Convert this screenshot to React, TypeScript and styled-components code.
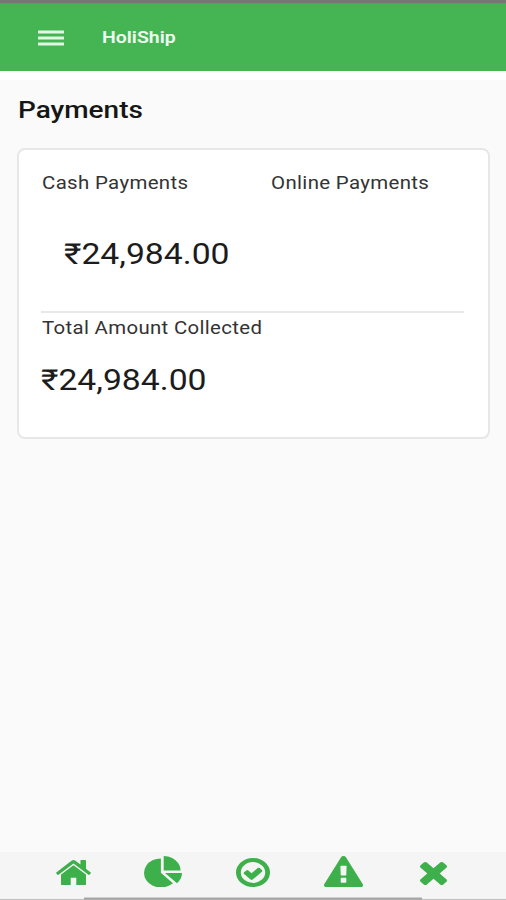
import React from "react";
import styled, { createGlobalStyle } from "styled-components";

const GlobalStyle = createGlobalStyle`
  *, *::before, *::after { box-sizing: border-box; }
  html, body, #root { margin: 0; height: 100%; }
  body { font-family: Roboto, "Liberation Sans", sans-serif; color: #1c1c1c; }
`;

const Screen = styled.div`
  height: 100vh;
  min-height: 900px;
  display: flex;
  flex-direction: column;
  background: #fafafa;
  overflow: hidden;
`;

const StatusStrip = styled.div`
  height: 4px;
  background: #777876;
  border-bottom: 1px solid #65956a;
`;

const Header = styled.header`
  height: 67px;
  display: flex;
  align-items: center;
  padding: 0 0 1px 38px;
  background: #45b553;
  color: #effcf0;
`;

const MenuButton = styled.button`
  display: flex;
  width: 26px;
  margin: 2px 38px 0 0;
  padding: 0;
  border: 0;
  background: none;
  color: #e2f8e3;
`;

const HeaderEdge = styled.div`
  height: 9px;
  background: #fff;
`;

const Text = styled.span<{ $size: number; $stretch: number; $weight?: number; $spacing?: number }>`
  display: block;
  width: max-content;
  font-size: ${(p) => p.$size}px;
  line-height: 1.2;
  font-weight: ${(p) => p.$weight ?? 400};
  letter-spacing: ${(p) => p.$spacing ?? 0}px;
  transform: scaleX(${(p) => p.$stretch});
  transform-origin: left center;
  white-space: nowrap;
`;

const Main = styled.main`
  flex: 1;
  padding: 15px 16px 0 17px;
`;

const Title = styled.h1`
  margin: 0 0 23px 1px;
  height: 30px;
  display: flex;
  align-items: center;
  color: #161616;
`;

const Card = styled.section`
  height: 291px;
  border: 2px solid #e7e7e7;
  border-radius: 8px;
  background: #fff;
  padding: 22px 24px 0 22px;
`;

const Columns = styled.div`
  display: grid;
  grid-template-columns: 229px 1fr;
  height: 141px;
  border-bottom: 2px solid #e8e8e8;
`;

const Label = styled.div`
  height: 22px;
  padding-left: 0.5px;
  color: #333;
`;

const Amount = styled.div<{ $inset?: number; $gap: number }>`
  margin-top: ${(p) => p.$gap}px;
  padding-left: ${(p) => p.$inset ?? 0}px;
`;

const Total = styled.div`
  padding-top: 4px;
`;

const Nav = styled.nav`
  height: 45px;
  display: grid;
  grid-template-columns: repeat(5, 90px);
  padding-left: 28px;
  background: #f5f5f5;
`;

const NavItem = styled.button<{ $top: number }>`
  display: flex;
  justify-content: center;
  align-items: flex-start;
  padding: ${(p) => p.$top}px 0 0;
  border: 0;
  background: none;
  color: #3eb04b;
`;

const BottomEdge = styled.div`
  height: 3px;
  display: grid;
  grid-template-columns: 84px 338px 1fr;
`;

const EdgePart = styled.div<{ $dark?: boolean }>`
  border-top: 1px solid ${(p) => (p.$dark ? "#cfcfcf" : "#f8f8f8")};
  border-bottom: 1px solid ${(p) => (p.$dark ? "#acacac" : "#c4c4c4")};
  background: ${(p) => (p.$dark ? "#a5a5a5" : "#eeeeee")};
`;

type IconProps = { width: number; height: number; viewBox: string; children: React.ReactNode };

function Icon({ width, height, viewBox, children }: IconProps) {
  return (
    <svg width={width} height={height} viewBox={viewBox} preserveAspectRatio="none" fill="currentColor" aria-hidden="true">
      {children}
    </svg>
  );
}

const navItems = [
  {
    label: "Home", top: 7.5, width: 35, height: 25.5, viewBox: "88 253 1616 1283",
    art: <path d="M1472 992v480q0 26-19 45t-45 19h-384v-384h-256v384h-384q-26 0-45-19t-19-45v-480q0-1 .5-3t.5-3l575-474 575 474q1 2 1 6zm223-69l-62 74q-8 9-21 11h-3q-13 0-21-7l-692-577-692 577q-12 8-24 7-13-2-21-11l-62-74q-8-10-7-23.5t11-21.500l719-599q32-26 76-26t76 26l244 204v-195q0-14 9-23t23-9h192q14 0 23 9t9 23v408l219 182q10 8 11 21.500t-7 23.500z" />,
  },
  {
    label: "Reports", top: 3.5, width: 38, height: 31.5, viewBox: "0 0 1728 1664",
    art: <path d="M768 890l546 546q-106 108-247.500 168t-298.500 60q-209 0-385.500-103t-279.500-279.500-103-385.500 103-385.500 279.500-279.500 385.500-103v762zm187 6h773q0 157-60 298.500t-168 247.500zm709-128h-768v-768q209 0 385.500 103t279.500 279.500 103 385.500z" />,
  },
  {
    label: "Completed", top: 6, width: 34, height: 29, viewBox: "0 0 1536 1536",
    art: (
      <>
        <circle cx="768" cy="768" r="660" fill="none" stroke="currentColor" strokeWidth="216" />
        <path d="M1171 723l-422 422q-19 19-45 19t-45-19l-294-294q-19-19-19-45t19-45l102-102q19-19 45-19t45 19l147 147 275-275q19-19 45-19t45 19l102 102q19 19 19 45t-19 45z" />
      </>
    ),
  },
  {
    label: "Alerts", top: 3.5, width: 39, height: 31.5, viewBox: "0 0 1792 1664",
    art: <path d="M1024 1375v-190q0-14-9.500-23.500t-22.500-9.500h-192q-13 0-22.500 9.500t-9.500 23.500v190q0 14 9.500 23.500t22.500 9.500h192q13 0 22.500-9.500t9.500-23.500zm-2-374l18-459q0-12-10-19-13-11-24-11h-220q-11 0-24 11-10 7-10 21l17 457q0 10 10 16.500t24 6.500h185q14 0 23.500-6.500t10.500-16.500zm-14-934l768 1408q35 63-2 126-17 29-46.500 46t-63.500 17h-1536q-34 0-63.500-17t-46.500-46q-37-63-2-126l768-1408q17-31 47-49t65-18 65 18 47 49z" />,
  },
  {
    label: "Cancelled", top: 10, width: 27, height: 23, viewBox: "302 366 1188 1188",
    art: <path d="M1490 1322q0 40-28 68l-136 136q-28 28-68 28t-68-28l-294-294-294 294q-28 28-68 28t-68-28l-136-136q-28-28-28-68t28-68l294-294-294-294q-28-28-28-68t28-68l136-136q28-28 68-28t68 28l294 294 294-294q28-28 68-28t68 28l136 136q28 28 28 68t-28 68l-294 294 294 294q28 28 28 68z" />,
  },
];

export default function App() {
  return (
    <>
      <GlobalStyle />
      <Screen>
        <StatusStrip />
        <Header>
          <MenuButton aria-label="Menu">
            <Icon width={26} height={16} viewBox="0 0 26 16">
              <rect y="0.5" width="26" height="3" rx="0.5" />
              <rect y="6.500" width="26" height="3" rx="0.5" />
              <rect y="12.500" width="26" height="3" rx="0.5" />
            </Icon>
          </MenuButton>
          <Text $size={17} $stretch={1.145} $weight={600}>HoliShip</Text>
        </Header>
        <HeaderEdge />
        <Main>
          <Title>
            <Text $size={24} $stretch={1.165} $weight={500}>Payments</Text>
          </Title>
          <Card>
            <Columns>
              <div>
                <Label><Text $size={18} $stretch={1.135} $spacing={0.3}>Cash Payments</Text></Label>
                <Amount $inset={22.5} $gap={43}>
                  <Text $size={29} $stretch={1.162}>₹24,984.00</Text>
                </Amount>
              </div>
              <Label><Text $size={18} $stretch={1.135} $spacing={0.3}>Online Payments</Text></Label>
            </Columns>
            <Total>
              <Label><Text $size={18} $stretch={1.132} $spacing={0.3}>Total Amount Collected</Text></Label>
              <Amount $gap={24}>
                <Text $size={29} $stretch={1.162}>₹24,984.00</Text>
              </Amount>
            </Total>
          </Card>
        </Main>
        <Nav>
          {navItems.map((n) => (
            <NavItem key={n.label} $top={n.top} aria-label={n.label}>
              <Icon width={n.width} height={n.height} viewBox={n.viewBox}>{n.art}</Icon>
            </NavItem>
          ))}
        </Nav>
        <BottomEdge>
          <EdgePart />
          <EdgePart $dark />
          <EdgePart />
        </BottomEdge>
      </Screen>
    </>
  );
}
